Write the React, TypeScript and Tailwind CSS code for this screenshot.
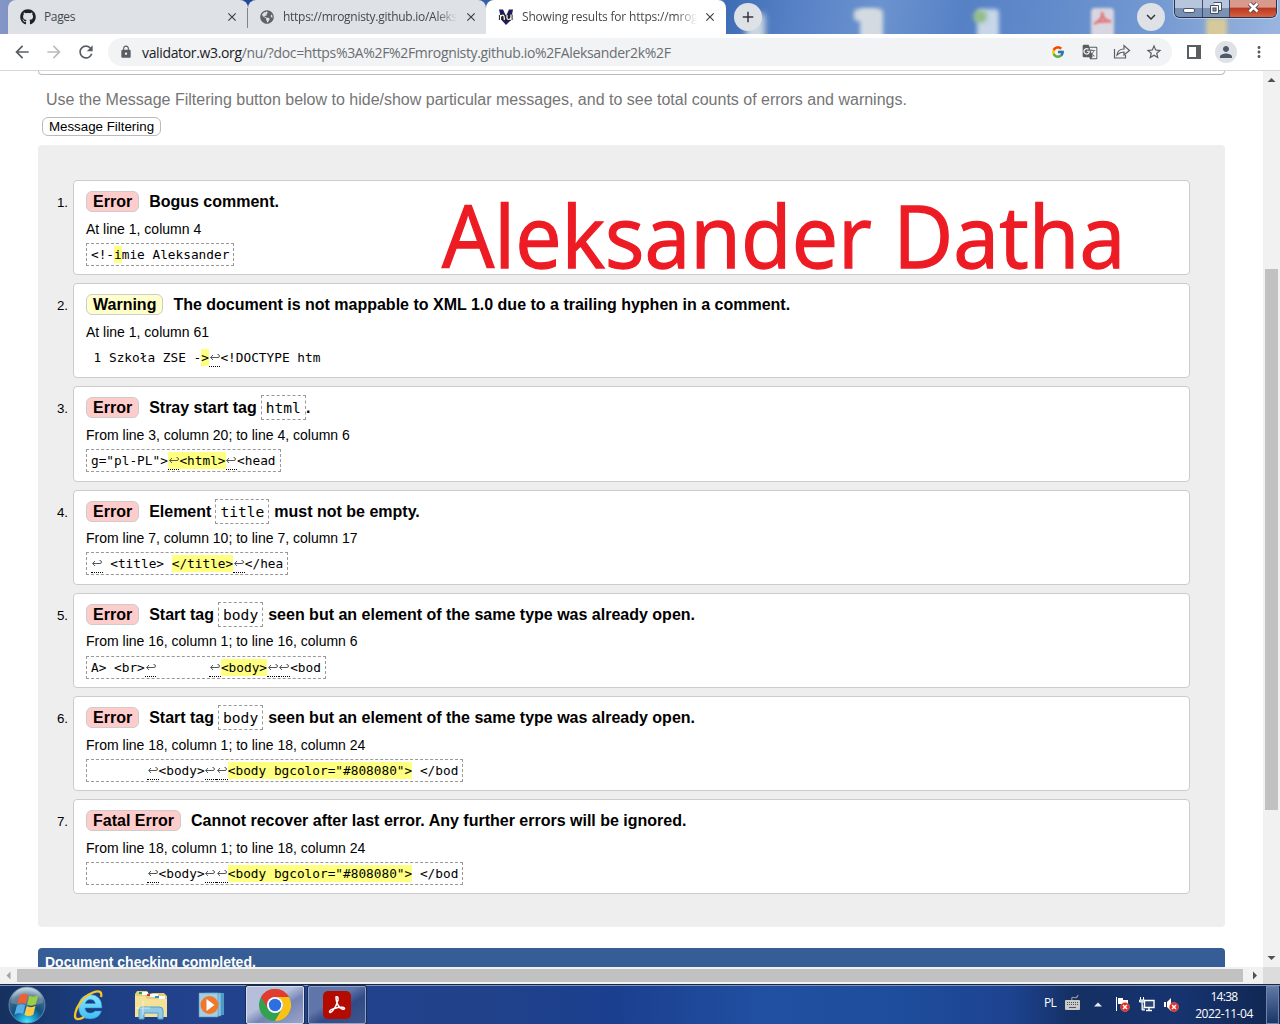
import React from "react";
import { FaGithub, FaGlobeAmericas } from "react-icons/fa";
import {
  MdArrowBack,
  MdArrowForward,
  MdClose,
  MdGTranslate,
  MdLock,
  MdMoreVert,
  MdPerson,
  MdRefresh,
  MdStarBorder,
  MdAdd,
  MdExpandMore,
} from "react-icons/md";
import { FcGoogle } from "react-icons/fc";

/* ---------- Browser frame ---------- */

function NuIcon() {
  return (
    <svg width="16" height="16" viewBox="0 0 16 16" className="shrink-0">
      <path d="M1 0.500 L5 0.500 L8 7 L11 0.500 L15 0.500 L13 11 L8 16 L3.500 11 Z" fill="#1f1d5c" />
      <path d="M2.500 11V6M2.500 8Q3 6 5 6Q6.500 6.500 6.300 11M9 6V9Q9 10.500 11 10.500Q13 10 13 8M13 5.500V11" fill="none" stroke="#222" strokeWidth="3.200" />
      <path d="M2.500 11V6M2.500 8Q3 6 5 6Q6.500 6.500 6.300 11M9 6V9Q9 10.500 11 10.500Q13 10 13 8M13 5.500V11" fill="none" stroke="#fff" strokeWidth="1.200" />
    </svg>
  );
}

function TabStrip() {
  return (
    <div className="relative flex h-[34px] overflow-hidden bg-linear-to-r from-[#8496c6] via-[#1c4696] via-20% to-[#94b2de]">
      <div className="absolute top-0 left-[724px] h-full w-[556px] bg-[linear-gradient(100deg,#3d6bb5_0%,#5680c5_12%,#6b93cf_28%,#5681c5_43%,#628ccb_60%,#7399d1_77%,#9ab5df_100%)]" />
      <div className="absolute top-[9px] left-[854px] h-[12px] w-[24px] rounded bg-[#d3dbe1] blur-[2px]" />
      <div className="absolute top-[9px] left-[860px] h-[36px] w-[23px] rounded bg-[#d3dbe1] blur-[2px]" />
      <div className="absolute top-[9px] left-[977px] h-[36px] w-[22px] rounded bg-[#c7d6e8] blur-[2px]" />
      <div className="absolute top-[10px] left-[973px] h-[13px] w-[14px] rounded-full bg-[#92bd8c] blur-[2px]" />
      <div className="absolute top-[8px] left-[1091px] h-[36px] w-[23px] rounded bg-[#d9d6e1] blur-[1.500px]" />
      <svg width="20" height="16" viewBox="0 0 20 16" className="absolute top-[11px] left-[1093px] blur-[1px]">
        <path d="M9 1Q11 8 1 13M9 1Q9 9 18 11M4 11L18 10" fill="none" stroke="#e0787a" strokeWidth="2.500" />
      </svg>
      <div className="absolute top-[18px] left-[1206px] h-[26px] w-[21px] bg-[#d6ca9c] blur-[2px]" />
      <div className="absolute top-[14px] left-[746px] h-[28px] w-[19px] bg-[#cbd7e0] blur-[3px]" />

      <div className="relative flex w-full font-['Open_Sans',sans-serif] text-[12px] text-[#45494d]">
        <div className="ml-2 flex w-[240px] items-center rounded-t-lg bg-[#dee1e6] pr-[9px] pl-[12px]">
          <FaGithub className="size-4 text-[#1f2328]" />
          <span className="ml-2 flex-1 tracking-[-0.350px]">Pages</span>
          <MdClose className="size-[14px] text-[#3c4043]" />
        </div>
        <div className="relative flex w-[238px] items-center rounded-t-lg bg-[#dee1e6] pr-[8px] pl-[12px]">
          <div className="absolute top-[8px] left-[-1px] h-[20px] w-px bg-[#808388]" />
          <FaGlobeAmericas className="size-[14px] text-[#5f6368]" />
          <span className="ml-[9px] w-[174px] overflow-hidden whitespace-nowrap tracking-[-0.280px] [mask-image:linear-gradient(90deg,#000_88%,transparent)]">
            https://mrognisty.github.io/Aleks
          </span>
          <MdClose className="ml-auto size-[14px] shrink-0 text-[#3c4043]" />
        </div>
        <div className="flex w-[240px] items-center rounded-t-lg bg-white pr-[9px] pl-[12px]">
          <NuIcon />
          <span className="ml-2 w-[175px] overflow-hidden whitespace-nowrap tracking-[-0.180px] [mask-image:linear-gradient(90deg,#000_88%,transparent)]">
            Showing results for https://mrog
          </span>
          <MdClose className="ml-auto size-[14px] shrink-0 text-[#3c4043]" />
        </div>
        <div className="mt-[3px] ml-[8px] flex size-7 items-center justify-center rounded-full bg-[#dee1e6] text-[#34373b]">
          <MdAdd className="size-[18px]" />
        </div>
        <div className="mt-[3px] ml-[375px] flex size-7 items-center justify-center rounded-full bg-[#dee1e6] text-[#34373b]">
          <MdExpandMore className="size-[18px]" />
        </div>
        <WindowButtons />
      </div>
    </div>
  );
}

function WindowButtons() {
  return (
    <div className="ml-[9px] flex h-[18px] w-[103px] overflow-hidden rounded-b-md border border-t-0 border-[#27334d] shadow-[0_0_0_1px_rgba(255,255,255,.4)]">
      <div className="flex w-[28px] items-end justify-center border-r border-[#3a4d70] bg-linear-to-b from-[#b7c6dd] from-45% to-[#7890b4] to-50% pb-[4px]">
        <div className="h-[5px] w-[12px] rounded-xs border border-[#4b5366] bg-white" />
      </div>
      <div className="flex w-[27px] items-start justify-center border-r border-[#3a4d70] bg-linear-to-b from-[#b7c6dd] from-45% to-[#7b92b2] to-50% pt-[2px]">
        <svg width="12" height="12" viewBox="0 0 12 12">
          <path d="M3.500 .5h8v8h-3M.5 3.500h8v8h-8z" fill="#f7f7f7" stroke="#454f62" />
          <rect x="3" y="6" width="3" height="3" fill="#8ba0bd" stroke="#454f62" />
        </svg>
      </div>
      <div className="flex flex-1 items-start justify-center bg-linear-to-b from-[#d99a8e] from-40% via-[#bd3722] via-50% to-[#d6623f] pt-[2px]">
        <svg width="13" height="11" viewBox="0 0 13 11">
          <path d="M2.500 1.500l8 8m0-8l-8 8" stroke="#57454b" strokeWidth="4.500" />
          <path d="M2.500 1.500l8 8m0-8l-8 8" stroke="#fff" strokeWidth="2.600" />
        </svg>
      </div>
    </div>
  );
}

function Toolbar() {
  return (
    <div className="flex h-[37px] items-center border-b border-[#d5d7da] bg-white text-[#5a5e63]">
      <MdArrowBack className="ml-[12px] size-5" />
      <MdArrowForward className="ml-[12px] size-5 text-[#babcbe]" />
      <MdRefresh className="ml-[12px] size-5" />
      <div className="ml-[12px] flex h-7 w-[1064px] items-center rounded-full bg-[#f1f3f4] pl-[11px]">
        <MdLock className="size-[14px]" />
        <span className="ml-[9px] font-['Open_Sans',sans-serif] text-[14px] tracking-[-0.345px] whitespace-nowrap text-[#6a6e73]">
          <span className="text-[#202124]">validator.w3.org</span>
          /nu/?doc=https%3A%2F%2Fmrognisty.github.io%2FAleksander2k%2F
        </span>
        <div className="mr-[9px] ml-auto flex items-center">
          <FcGoogle className="size-[14px]" />
          <MdGTranslate className="ml-[17px] size-4" />
          <svg width="18" height="16" viewBox="0 0 18 16" fill="none" stroke="currentColor" className="ml-[15px]" strokeWidth="1.200">
            <path d="M1.500 5v9h11v-3M4 11C4.500 7 7 5 11 5V1.500L16.500 6.500L11 11V8C8 8 6 9 4 11Z" />
          </svg>
          <MdStarBorder className="ml-[14px] size-[18px]" />
        </div>
      </div>
      <svg width="14" height="14" viewBox="0 0 14 14" className="ml-[15px]">
        <path d="M0 0h14v14H0zM2 2v10h7V2z" fill="currentColor" fillRule="evenodd" />
      </svg>
      <div className="ml-[14px] flex size-[22px] items-center justify-center rounded-full bg-[#dee1e6] text-[#4e596b]">
        <MdPerson className="size-[18px]" />
      </div>
      <MdMoreVert className="ml-[13px] size-[18px]" />
    </div>
  );
}

/* ---------- Validator results ---------- */

function Ret() {
  return (
    <span className="flex h-[18px] w-[11.550px] justify-center border-b border-dotted border-black pt-[5px] text-[#555]">
      <svg width="10" height="7" viewBox="0 0 10 7" fill="none" stroke="currentColor" strokeWidth="1">
        <path d="M3 1L.7 3.500l2.300 2.500M.7 3.500h7.300Q9.500 3.500 9.500 2Q9.500 .5 7.500 .5" />
      </svg>
    </span>
  );
}

function Mark({ children }: { children: React.ReactNode }) {
  return <span className="flex h-[17px] bg-[#ffff80]">{children}</span>;
}

function Tag({ children }: { children: React.ReactNode }) {
  return (
    <code className="mr-[5px] ml-[4px] block h-[25px] border border-dashed border-[#999] px-1 font-['DejaVu_Sans_Mono',monospace] text-[14.600px] leading-[24px] font-normal">
      {children}
    </code>
  );
}

type Item = {
  kind: "Error" | "Warning" | "Fatal Error";
  title: React.ReactNode;
  where: string;
  code: React.ReactNode;
  plain?: boolean;
  tall?: boolean;
  tight?: boolean;
};

const lastExtract = (
  <>
    <span className="w-[56px]" />
    <Ret />
    {"<body>"}
    <Ret />
    <Ret />
    <Mark>{'<body bgcolor="#808080">'}</Mark>
    {" </bod"}
  </>
);

const bodyTitle = (
  <>
    Start tag<Tag>body</Tag>seen but an element of the same type was already open.
  </>
);

const items: Item[] = [
  {
    kind: "Error",
    title: "Bogus comment.",
    where: "At line 1, column 4",
    code: (
      <>
        {"<!-"}
        <Mark>i</Mark>
        {"mie Aleksander"}
      </>
    ),
  },
  {
    kind: "Warning",
    title: "The document is not mappable to XML 1.0 due to a trailing hyphen in a comment.",
    where: "At line 1, column 61",
    plain: true,
    code: (
      <>
        {"1 Szkoła ZSE -"}
        <Mark>{">"}</Mark>
        <Ret />
        {"<!DOCTYPE htm"}
      </>
    ),
  },
  {
    kind: "Error",
    tall: true,
    title: (
      <>
        Stray start tag<Tag>html</Tag>
        <span className="-ml-[5px]">.</span>
      </>
    ),
    where: "From line 3, column 20; to line 4, column 6",
    code: (
      <>
        {'g="pl-PL">'}
        <Mark>
          <Ret />
          {"<html>"}
        </Mark>
        <Ret />
        {"<head"}
      </>
    ),
  },
  {
    kind: "Error",
    tight: true,
    title: (
      <>
        Element<Tag>title</Tag>must not be empty.
      </>
    ),
    where: "From line 7, column 10; to line 7, column 17",
    code: (
      <>
        <Ret />
        {" <title> "}
        <Mark>{"</title>"}</Mark>
        <Ret />
        {"</hea"}
      </>
    ),
  },
  {
    kind: "Error",
    tight: true,
    title: bodyTitle,
    where: "From line 16, column 1; to line 16, column 6",
    code: (
      <>
        {"A> <br>"}
        <Ret />
        <span className="w-[53px]" />
        <Ret />
        <Mark>{"<body>"}</Mark>
        <Ret />
        <Ret />
        {"<bod"}
      </>
    ),
  },
  { kind: "Error", title: bodyTitle, where: "From line 18, column 1; to line 18, column 24", code: lastExtract },
  {
    kind: "Fatal Error",
    title: "Cannot recover after last error. Any further errors will be ignored.",
    where: "From line 18, column 1; to line 18, column 24",
    code: lastExtract,
  },
];

function Message({ item, index }: { item: Item; index: number }) {
  return (
    <li className={item.tall ? "flex h-[104px]" : "flex h-[103px]"}>
      <span className="w-[30px] pt-[14px] text-right text-[13.333px] leading-[18px]">{index + 1}.</span>
      <div
        className={
          "ml-[5px] w-[1117px] rounded border border-[#ccc] bg-white pl-[12px] " + (item.tall ? "h-[96px]" : "h-[95px]")
        }
      >
        <div className="mt-[10px] flex h-[21px] items-center text-[16px] leading-[20px] font-bold whitespace-nowrap">
          <span
            className={
              "mr-[10px] h-[21px] rounded-md border border-[#ccc] px-[6px] leading-[20px] " +
              (item.kind === "Warning" ? "bg-[#ffffcc]" : "bg-[#ffcccc]")
            }
          >
            {item.kind}
          </span>
          <span className="flex h-[25px] items-center">{item.title}</span>
        </div>
        <p className={"text-[14px] leading-[20px] " + (item.tight ? "mt-[6px]" : "mt-[7px]")}>{item.where}</p>
        <div
          className={
            "flex h-[23px] w-fit items-start border border-dashed px-1 pt-[2px] font-['DejaVu_Sans_Mono',monospace] text-[12.780px] leading-[17px] whitespace-pre " +
            (item.plain ? "ml-[2.600px] border-transparent " : "border-[#999] ") +
            (item.tight && index === 4 ? "mt-[5px]" : "mt-[4px]")
          }
        >
          {item.code}
        </div>
      </div>
    </li>
  );
}

function Page() {
  return (
    <main className="relative w-[1263px] overflow-hidden bg-white pl-[38px] text-black">
      <div className="h-[4px] w-[1187px] rounded-b border border-t-0 border-[#bbb]" />
      <p className="mt-[15px] ml-[8px] text-[16px] leading-[20px] text-[#757575]">
        Use the Message Filtering button below to hide/show particular messages, and to see total counts of errors and
        warnings.
      </p>
      <button className="mt-[7px] ml-[4px] block h-[19px] w-[119px] rounded-md border border-[#bbb] bg-white text-[13.333px] leading-[17px] whitespace-nowrap">
        Message Filtering
      </button>
      <ol className="mt-[9px] h-[782px] w-[1187px] rounded bg-[#eee] pt-[35px]">
        {items.map((item, i) => (
          <Message key={i} item={item} index={i} />
        ))}
      </ol>
      <p className="mt-[21px] h-[40px] w-[1187px] rounded bg-[#365d95] pt-[4px] pl-[7px] text-[14px] leading-[20px] font-bold text-white">
        Document checking completed.
      </p>
      <div className="absolute top-[104px] left-[442px] origin-left scale-x-[0.967] font-['Open_Sans',sans-serif] text-[85.500px] leading-[120px] whitespace-nowrap text-[#ed1c24] [-webkit-text-stroke:1.300px_#ed1c24]">
        Aleksander Datha
      </div>
    </main>
  );
}

/* ---------- Taskbar ---------- */

function StartOrb() {
  return (
    <svg width="38" height="38" viewBox="0 0 38 38">
      <defs>
        <radialGradient id="orb" cx=".5" cy="1" r=".95">
          <stop offset="0" stopColor="#4ff4ff" />
          <stop offset=".25" stopColor="#1b9fd0" />
          <stop offset=".5" stopColor="#14527f" />
          <stop offset=".8" stopColor="#44698a" />
          <stop offset="1" stopColor="#b4cad8" />
        </radialGradient>
      </defs>
      <circle cx="19" cy="19" r="18" fill="url(#orb)" stroke="#6d93b4" strokeWidth=".8" />
      <path d="M3 17a16 15 0 0 1 32 0Q19 23 3 17Z" fill="#fff" opacity=".2" />
      <path d="M11.500 9.500q4.500-3 8.500-.5l-2.300 9q-4-2.300-8.500.4z" fill="#ee6032" />
      <path d="M21.300 9.800q4.500 2.200 9-.5l-2.400 8.800q-4.400 2.800-8.900.5z" fill="#9bcd45" />
      <path d="M8.800 19.800q4.400-2.700 8.500-.5l-2.300 8.700q-4.200-2.200-8.500.6z" fill="#58aee9" />
      <path d="M18.700 20q4.400 2.400 8.900-.3l-2.400 9q-4.300 2.600-8.800.3z" fill="#fecb45" />
    </svg>
  );
}

function IeIcon() {
  return (
    <svg width="32" height="32" viewBox="0 0 32 32">
      <defs>
        <linearGradient id="ie" x2="0" y2="1">
          <stop stopColor="#8ce4ff" />
          <stop offset="1" stopColor="#3fbdf2" />
        </linearGradient>
      </defs>
      <path d="M29 19H12q.5 5 5.500 5 3 0 4.500-2h6.500Q26 30 17 30 5.500 29.500 5.500 18 6 6 17 5.500 29 6 29 19ZM12.300 14.500h10q-.6-4-5-4-4.300.3-5 4Z" fill="url(#ie)" stroke="#1784c9" strokeWidth=".5" />
      <path d="M28 8Q30 0 20 3.500 10 7 4 19 0 29 4 30 7 30.500 11 28" fill="none" stroke="#f9c425" strokeWidth="2.300" />
    </svg>
  );
}

function ExplorerIcon() {
  return (
    <svg width="34" height="32" viewBox="0 0 34 32">
      <path d="M1 5l2-3h10l2 3 4-1h11l3 3v21H1z" fill="#e3cd7b" />
      <path d="M8 3h6v3H8zM16 5h8v3h-8zM25 7h6v3h-6z" fill="#fff" />
      <path d="M5 3h3v2H5z" fill="#18a344" />
      <path d="M13 5h3v2h-3z" fill="#d33a2c" />
      <path d="M21 7h4v2h-4z" fill="#2b8fe5" />
      <path d="M1 7h10l2 3h20v18H1z" fill="#f3e19a" />
      <path d="M5 30V21q0-3 3-3h17q4 0 4 3v9h-5v-6H10v6z" fill="#8fcbe9" stroke="#579fc9" />
      <path d="M9 12v14M2 19h14" stroke="#fff" opacity=".6" />
    </svg>
  );
}

function MediaIcon() {
  return (
    <svg width="28" height="28" viewBox="0 0 28 28">
      <path d="M10 2h16v22H10z" fill="#4e9bc8" />
      <path d="M7 2h16v23H7z" fill="#8bc3df" stroke="#4b95bd" strokeWidth=".6" />
      <path d="M1 2h19v24H1z" fill="#a6cde2" stroke="#5397bf" strokeWidth=".6" />
      <circle cx="11.500" cy="14" r="9" fill="#f0782a" />
      <path d="M8.500 8v12l8-6z" fill="#fff" />
    </svg>
  );
}

function ChromeIcon() {
  return (
    <svg width="32" height="32" viewBox="0 0 32 32">
      <circle cx="16" cy="16" r="16" fill="#31a350" />
      <path d="M2.140 8A16 16 0 0 1 29.860 8H16A8 8 0 0 0 9.070 20Z" fill="#e33b2e" />
      <path d="M29.860 8A16 16 0 0 1 16 32L22.930 20A8 8 0 0 0 16 8Z" fill="#fbc116" />
      <circle cx="16" cy="16" r="8" fill="#fff" />
      <circle cx="16" cy="16" r="6.200" fill="#2d6ee0" />
    </svg>
  );
}

function AcrobatIcon() {
  return (
    <svg width="28" height="28" viewBox="0 0 28 28">
      <rect width="28" height="28" rx="5" fill="#b30b00" />
      <path d="M13 6q2.500-1 2 3-1.500 6.500-5.500 11-2.500 2.500-3 .8Q6.500 18.500 15 16.600q6.500-1 6.500 1-.8 1.700-4.500-1Q13 12.500 13 6Z" fill="none" stroke="#fff" strokeWidth="1.500" />
    </svg>
  );
}

function RedX({ x, y }: { x: number; y: number }) {
  return (
    <g>
      <circle cx={x} cy={y} r="4.500" fill="#e02c22" stroke="#f28a80" strokeWidth=".5" />
      <path d={`M${x - 2} ${y - 2}l4 4m0-4l-4 4`} stroke="#fff" strokeWidth="1.500" />
    </g>
  );
}

function Taskbar() {
  return (
    <footer className="flex h-[40px] items-center border-t border-[#1b2944] bg-[linear-gradient(90deg,#16305f_0%,#1c3e80_7%,#22428e_15%,#21428b_38%,#1b3f8f_48%,#2150a2_60%,#1e4d9d_70%,#1d4390_79%,#142f62_84%,#173470_92%,#10264f_100%)] shadow-[inset_0_1px_0_#7f97c0]">
      <div className="ml-[8px]">
        <StartOrb />
      </div>
      <div className="ml-[27px]">
        <IeIcon />
      </div>
      <div className="ml-[29px]">
        <ExplorerIcon />
      </div>
      <div className="ml-[30px]">
        <MediaIcon />
      </div>
      <div className="ml-[20px] flex h-[38px] w-[58px] items-center justify-center rounded-xs border border-[#d8deed] bg-[linear-gradient(150deg,#b5bfdc_40%,#7584b5_60%,#9aa5c8)] shadow-[0_0_0_1px_#182b55]">
        <ChromeIcon />
      </div>
      <div className="ml-[4px] flex h-[38px] w-[58px] items-center justify-center rounded-xs border border-[#92a1c5] bg-[linear-gradient(150deg,#6075aa_40%,#314b87_60%,#3d568e)] shadow-[0_0_0_1px_#182b55]">
        <AcrobatIcon />
      </div>
      <div className="ml-auto flex h-full items-center font-['Open_Sans',sans-serif] text-[12px] text-white">
        <span className="mb-[3px] w-[14px] tracking-[-0.700px]">PL</span>
        <svg width="17" height="17" viewBox="0 0 17 17" className="mb-[5px] ml-[6px]">
          <path d="M8 6q-1-3.500 2-2.500t4-2.500" fill="none" stroke="#8e9396" strokeWidth="1.300" />
          <rect x="1" y="6" width="15" height="10" rx="1" fill="#c8c9c8" />
          <path d="M3 8.500h11M3 10.500h11" stroke="#50545a" strokeDasharray="1 1" />
          <path d="M5 13.500h7" stroke="#50545a" />
        </svg>
        <svg width="8" height="5" viewBox="0 0 8 5" className="ml-[13px]">
          <path d="M0 4.500L4 .5l4 4z" fill="#e7edf7" />
        </svg>
        <svg width="17" height="17" viewBox="0 0 17 17" className="ml-[12px]">
          <path d="M2.500 1v14" stroke="#fff" />
          <path d="M4 2h5v2h5v6H9V8H4z" fill="#fff" />
          <RedX x={11} y={11} />
        </svg>
        <svg width="17" height="17" viewBox="0 0 17 17" className="ml-[8px]">
          <path d="M5.500 4.500h9.500v7h-9.500zM7 14.500h6M10 12v2" fill="#274676" stroke="#fff" strokeWidth="1.400" />
          <path d="M1.500 1v3M4.500 1v3M.5 4h5v2h-5zM3 6v8h3" fill="#a8b2c4" stroke="#fff" strokeWidth="1" />
        </svg>
        <svg width="18" height="17" viewBox="0 0 18 17" className="ml-[7px]">
          <path d="M1 6h2v5H1zM4 6l4-4v13l-4-4z" fill="#fff" />
          <RedX x={11} y={11} />
        </svg>
        <div className="ml-[10px] flex w-[66px] flex-col items-center leading-[17px] whitespace-nowrap">
          <span className="tracking-[-0.700px]">14:38</span>
          <span className="tracking-[-0.500px]">2022-11-04</span>
        </div>
        <div className="ml-[9px] h-[38px] w-[13px] border border-[#6f84ab] bg-linear-to-b from-[#6079a6] to-[#1b3668]" />
        <div className="w-px" />
      </div>
    </footer>
  );
}

export default function App() {
  return (
    <div className="flex h-[1024px] w-[1280px] flex-col overflow-hidden bg-white font-['Liberation_Sans',sans-serif]">
      <TabStrip />
      <Toolbar />
      <div className="flex h-[896px]">
        <Page />
        <div className="flex w-[17px] flex-col items-center bg-[#f1f1f1]">
          <svg width="17" height="17" viewBox="0 0 17 17">
            <path d="M4.500 11L8.500 7l4 4z" fill="#505050" />
          </svg>
          <div className="mt-[181px] h-[541px] w-[13px] bg-[#c1c1c1]" />
          <svg width="17" height="17" viewBox="0 0 17 17" className="mt-auto">
            <path d="M4.500 6L8.500 10l4-4z" fill="#505050" />
          </svg>
        </div>
      </div>
      <div className="flex h-[17px] items-center bg-[#f1f1f1]">
        <svg width="17" height="17" viewBox="0 0 17 17">
          <path d="M10.500 4.500L6.500 8.500l4 4z" fill="#a3a3a3" />
        </svg>
        <div className="h-[13px] w-[1226px] bg-[#c1c1c1]" />
        <svg width="20" height="17" viewBox="0 0 20 17">
          <path d="M10 4.500L14 8.500l-4 4z" fill="#505050" />
        </svg>
        <div className="h-full w-[17px] bg-[#dcdcdc]" />
      </div>
      <Taskbar />
    </div>
  );
}
